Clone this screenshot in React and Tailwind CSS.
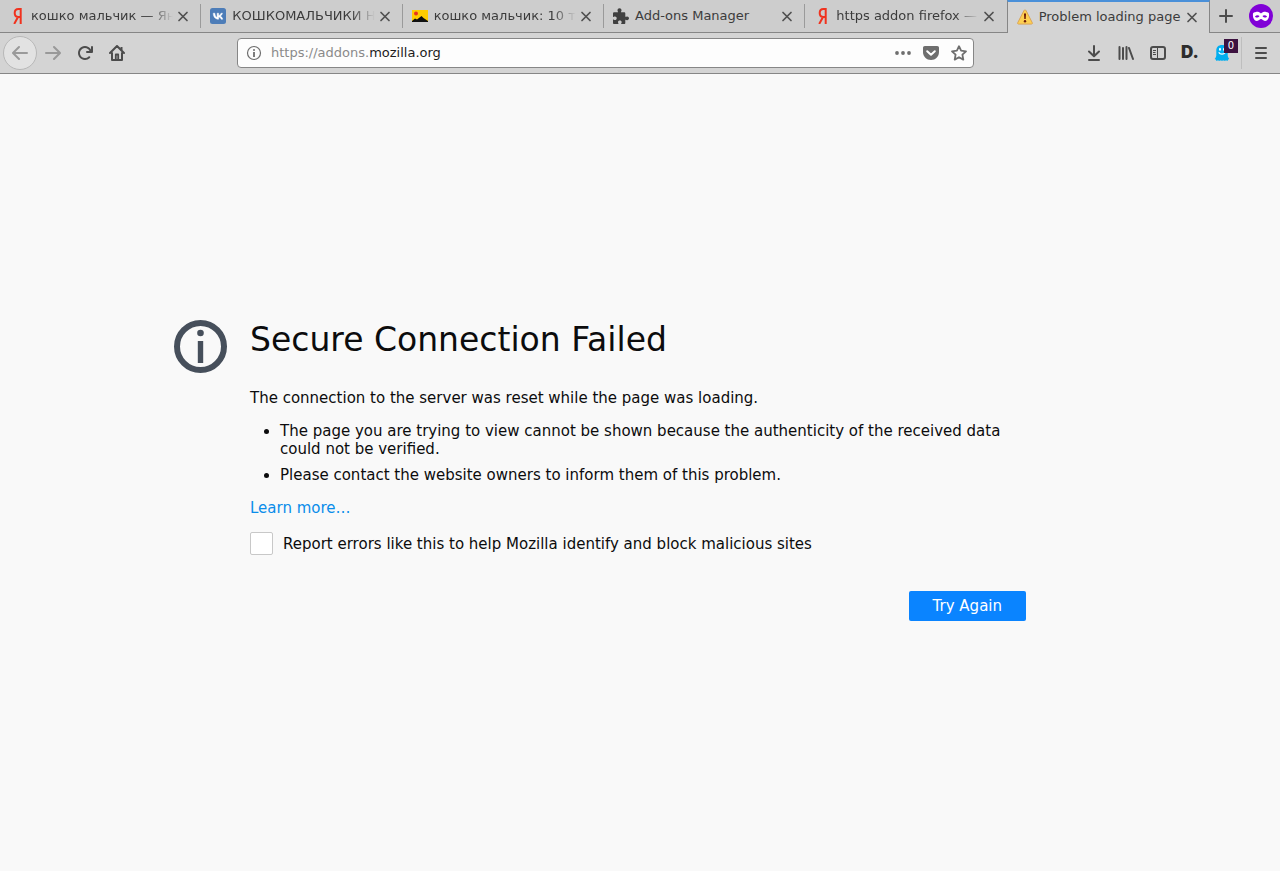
import { useState } from 'react';

const YandexIcon = () => (
  <svg width="16" height="16" viewBox="0 0 16 16" fill="none" stroke="#f0321e" strokeWidth="2">
    <path d="M11.700 0v16M12 1H9.500C7 1 5.700 2.600 5.700 5s1.500 4 3.700 4H12M9 9l-3.800 7" />
  </svg>
);

const VkIcon = () => (
  <svg width="16" height="16" viewBox="0 0 16 16">
    <rect width="16" height="16" rx="2.500" fill="#4d7db8" />
    <path
      d="M8.500 11.200c-3.300 0-5.200-2.300-5.300-6h1.700c.1 2.700 1.300 3.900 2.200 4.100V5.200h1.600v2.300c.9-.1 1.900-1.200 2.300-2.300h1.500c-.3 1.400-1.300 2.400-2.100 2.900.8.4 1.900 1.300 2.400 3.100h-1.700c-.4-1.100-1.300-2-2.400-2.100v2.100z"
      fill="#fff"
      stroke="#fff"
      strokeWidth=".4"
    />
  </svg>
);

const ImagesIcon = () => (
  <svg width="16" height="16" viewBox="0 0 16 16">
    <path d="M0 2h16v12H0z" fill="#fc0" />
    <path d="M0 14v-1l3-2.500 2 1L9.500 8l2 2 1.500 1 3 2v1z" fill="#111" />
    <circle cx="4" cy="5.500" r="2" fill="#e8321e" />
  </svg>
);

const PuzzleIcon = () => (
  <svg width="16" height="16" viewBox="0 0 16 16" fill="#404040">
    <path d="M0 5.500C0 4.700.6 4.200 1.300 4.200H5c.3-.4-.5-1-.5-2C4.500 1 5.300.2 6.500.2s2 .8 2 2c0 1-.8 1.600-.5 2h3.200c.6 0 1.100.5 1.100 1.100v3.500c.4.3.8-.4 1.800-.4 1.200 0 1.900.8 1.900 1.900s-.8 1.900-1.900 1.900c-1 0-1.400-.7-1.800-.4V15c0 .6-.4 1-1 1H8.200c-.4-.4.500-.9.500-1.900 0-.9-.8-1.600-1.900-1.600S5 13.200 5 14.100c0 1 .8 1.500.4 1.900H1.200C.5 16 0 15.500 0 14.900v-3.400c.4-.4.900.5 2 .5 1 0 1.700-.8 1.700-1.800S3 8.400 2 8.400c-1.100 0-1.600.9-2 .4z" />
  </svg>
);

const WarningIcon = () => (
  <svg width="16" height="16" viewBox="0 0 16 16">
    <path d="M8 .9c.5 0 .8.200 1 .6l6.300 12.300c.3.700 0 1.300-.8 1.300h-13c-.8 0-1.100-.6-.8-1.300L7 1.500c.2-.4.500-.6 1-.6z" fill="#fdcf50" stroke="#d9a45a" />
    <path d="M7 4.500h2l-.3 5.500H7.300z" fill="#6b1a05" />
    <circle cx="8" cy="12.200" r="1.200" fill="#6b1a05" />
  </svg>
);

const CloseIcon = () => (
  <svg width="12" height="12" viewBox="0 0 12 12" stroke="#505050" strokeWidth="1.700" strokeLinecap="round">
    <path d="M2 2.500l8 8M10 2.500l-8 8" />
  </svg>
);

const BackIcon = () => (
  <svg width="16" height="16" viewBox="0 0 16 16" fill="#9a9a9a">
    <path d="M15 7H3.414l4.293-4.293a1 1 0 0 0-1.414-1.414l-6 6a1 1 0 0 0 0 1.414l6 6a1 1 0 0 0 1.414-1.414L3.414 9H15a1 1 0 0 0 0-2z" />
  </svg>
);

const ForwardIcon = () => (
  <svg width="16" height="16" viewBox="0 0 16 16" fill="#999">
    <path d="M15.707 7.293l-6-6a1 1 0 0 0-1.414 1.414L12.586 7H1a1 1 0 0 0 0 2h11.586l-4.293 4.293a1 1 0 1 0 1.414 1.414l6-6a1 1 0 0 0 0-1.414z" />
  </svg>
);

const ReloadIcon = () => (
  <svg width="16" height="16" viewBox="0 0 16 16" fill="#4c4c4c">
    <path d="M15 1a1 1 0 0 0-1 1v2.418A6.995 6.995 0 1 0 8 15a6.954 6.954 0 0 0 4.950-2.050 1 1 0 0 0-1.414-1.414A5.019 5.019 0 1 1 12.549 6H10a1 1 0 0 0 0 2h5a1 1 0 0 0 1-1V2a1 1 0 0 0-1-1z" />
  </svg>
);

const HomeIcon = () => (
  <svg width="16" height="16" viewBox="0 0 16 16" fill="none" stroke="#4c4c4c" strokeWidth="2" strokeLinecap="round" strokeLinejoin="round">
    <path d="M1 8l7-7 7 7M3 8v7h10V8" />
    <path d="M6.800 14.500V9.500h2.400v5" strokeWidth="1.800" />
    <path d="M12.500 2v3" strokeLinecap="butt" />
  </svg>
);

const SiteInfoIcon = () => (
  <svg width="16" height="16" viewBox="0 0 16 16">
    <circle cx="8" cy="8" r="6.500" fill="none" stroke="#6e6e6e" strokeWidth="1.200" />
    <circle cx="8" cy="5" r="1" fill="#6e6e6e" />
    <path d="M7.100 7h1.800v5H7.100z" fill="#6e6e6e" />
  </svg>
);

const DotsIcon = () => (
  <svg width="16" height="16" viewBox="0 0 16 16" fill="#6e6e6e">
    <circle cx="2" cy="8" r="1.900" />
    <circle cx="8" cy="8" r="1.900" />
    <circle cx="14" cy="8" r="1.900" />
  </svg>
);

const PocketIcon = () => (
  <svg width="16" height="16" viewBox="0 0 16 16">
    <path d="M1.800 1h12.400C15.300 1 16 1.700 16 2.800V7c0 4.600-3.600 8-8 8s-8-3.400-8-8V2.800C0 1.700.7 1 1.800 1z" fill="#6e6e6e" />
    <path d="M4.200 6.200L8 9.800l3.800-3.600" fill="none" stroke="#fff" strokeWidth="2" strokeLinecap="round" strokeLinejoin="round" />
  </svg>
);

const StarIcon = () => (
  <svg width="16" height="16" viewBox="0 0 16 16" fill="none" stroke="#6e6e6e" strokeWidth="1.800" strokeLinejoin="round">
    <path d="M8 1.200l2.100 4.500 4.900.6-3.600 3.400.9 4.900L8 12.200l-4.300 2.400.9-4.900L1 6.300l4.900-.6z" />
  </svg>
);

const DownloadIcon = () => (
  <svg width="16" height="16" viewBox="0 0 16 16" fill="none" stroke="#4c4c4c" strokeWidth="2" strokeLinecap="round" strokeLinejoin="round">
    <path d="M8 1v10M3 6.500L8 11.300 13 6.500M3 15h10" />
  </svg>
);

const LibraryIcon = () => (
  <svg width="16" height="16" viewBox="0 0 16 16" fill="none" stroke="#4c4c4c" strokeWidth="2" strokeLinecap="round">
    <path d="M1.500 2v12M5 3v11M8.500 2v12M11 3l4 11" strokeWidth="2" />
  </svg>
);

const SidebarIcon = () => (
  <svg width="16" height="16" viewBox="0 0 16 16" fill="none" stroke="#4c4c4c">
    <rect x="1" y="2" width="14" height="12" rx="2" strokeWidth="2" />
    <path d="M7.500 2v12M3 5.500h3M3 7.500h2.500M3 9.500h3" />
  </svg>
);

const GhostIcon = () => (
  <svg width="16" height="16" viewBox="0 0 16 16">
    <path d="M8 0c3.600 0 5.700 2.200 5.700 5.500v5c.2 1.500.8 2.500 1.600 3.600-.9.200-1.300.7-1.800 1.900-1-.5-1.800-.6-2.700 0-.9-.6-1.800-.6-2.800 0-1-.6-1.900-.6-2.800 0-.9-.6-1.700-.5-2.700 0-.5-1.200-.9-1.700-1.800-1.900.8-1.100 1.400-2.100 1.600-3.600v-5C2.300 2.200 4.400 0 8 0z" fill="#00aef0" />
    <ellipse cx="6" cy="4.200" rx="1" ry="1.500" fill="#fff" />
    <ellipse cx="10" cy="4.200" rx="1" ry="1.500" fill="#fff" />
    <path d="M4.700 7.300c1.600 2.400 5 2.400 6.600 0" fill="none" stroke="#fff" strokeWidth="1.200" />
  </svg>
);

const MenuIcon = () => (
  <svg width="16" height="16" viewBox="0 0 16 16" stroke="#4c4c4c" strokeWidth="2" strokeLinecap="round">
    <path d="M3 3h10M3 8h10M3 13h10" />
  </svg>
);

const PlusIcon = () => (
  <svg width="16" height="16" viewBox="0 0 16 16" stroke="#4c4c4c" strokeWidth="2" strokeLinecap="round">
    <path d="M8 2v12M2 8h12" />
  </svg>
);

const PrivateIcon = () => (
  <svg width="24" height="24" viewBox="0 0 24 24">
    <circle cx="12" cy="12" r="12" fill="#8000d7" />
    <path
      fillRule="evenodd"
      d="M12 9.500C13.200 8.200 15 7.700 17 7.900c1.600.1 2.800.5 3 1.600.4 3-.5 7.400-4 7.400-1.800 0-2.700-1.800-4-1.800s-2.200 1.800-4 1.800c-3.500 0-4.400-4.400-4-7.400.2-1.100 1.400-1.500 3-1.600 2-.2 3.800.3 5 1.600zM5.900 12.400c.8.900 1.600 1.300 2.600 1.200s1.600-.6 2-1.500c-1-1.200-3-1.300-4.600.3zm12.200 0c-1.600-1.600-3.600-1.500-4.600-.3.400.9 1 1.400 2 1.500s1.800-.3 2.600-1.200z"
      fill="#fff"
    />
  </svg>
);

const ErrorInfoIcon = () => (
  <svg width="54" height="54" viewBox="0 0 54 54" className="shrink-0">
    <circle cx="26.500" cy="26.500" r="23.500" fill="none" stroke="#464f5b" strokeWidth="6" />
    <circle cx="26.500" cy="13" r="3.300" fill="#464f5b" />
    <path d="M23.800 21h5.400v22h-5.400z" fill="#464f5b" />
  </svg>
);

const tabs = [
  { title: 'кошко мальчик — Янд', Icon: YandexIcon, long: true },
  { title: 'КОШКОМАЛЬЧИКИ Ня', Icon: VkIcon, long: true },
  { title: 'кошко мальчик: 10 ты', Icon: ImagesIcon, long: true },
  { title: 'Add-ons Manager', Icon: PuzzleIcon },
  { title: 'https addon firefox — Я', Icon: YandexIcon, long: true },
  { title: 'Problem loading page', Icon: WarningIcon },
];

const Tab = ({ tab, active, separator, onSelect }) => (
  <div
    className={`flex h-full min-w-0 flex-1 items-center ${
      active
        ? 'border-x border-t-2 border-x-[#868686] border-t-[#4a90d9] bg-[#d4d4d4] pb-[2px] pl-[9px]'
        : 'border-b border-[#868686] pl-[9px]'
    }`}
  >
    <button
      role="tab"
      aria-selected={active}
      onClick={onSelect}
      className="flex min-w-0 flex-1 items-center gap-[6px] text-left"
    >
      <span className="shrink-0">
        <tab.Icon />
      </span>
      <span
        className={`min-w-0 flex-1 whitespace-nowrap ${
          tab.long ? 'overflow-hidden [mask-image:linear-gradient(to_left,transparent,black_24px)]' : ''
        }`}
      >
        {tab.title}
      </span>
    </button>
    <button aria-label="Close tab" className="mr-[11px] ml-1 shrink-0">
      <CloseIcon />
    </button>
    {!active && <div className={separator ? 'h-6 w-px bg-[#9a9a9a]' : 'w-px'} />}
  </div>
);

const ToolbarButton = ({ label, children }) => (
  <button aria-label={label} className="flex size-8 shrink-0 items-center justify-center">
    {children}
  </button>
);

const App = () => {
  const [activeTab, setActiveTab] = useState(5);
  const [report, setReport] = useState(false);

  return (
    <div className="flex min-h-screen flex-col bg-[#f9f9f9] font-['DejaVu_Sans',sans-serif] text-[#0c0c0d]">
      <header>
        <div className="flex h-[33px] bg-[#cdcdcd] text-[13px] text-[#3c3c3c]">
          <div role="tablist" className="flex min-w-0 flex-1">
            {tabs.map((tab, i) => (
              <Tab
                key={i}
                tab={tab}
                active={i === activeTab}
                separator={i !== activeTab && i + 1 !== activeTab}
                onSelect={() => setActiveTab(i)}
              />
            ))}
          </div>
          <div className="flex w-[70px] items-center justify-between border-b border-[#868686] pr-[7px] pl-2">
            <button aria-label="New tab">
              <PlusIcon />
            </button>
            <PrivateIcon />
          </div>
        </div>

        <nav className="flex h-[41px] items-center border-b border-[#868686] bg-[#d4d4d4] px-[3px]">
          <button
            aria-label="Back"
            className="flex size-[34px] shrink-0 items-center justify-center rounded-full border border-[#b8b8b8] bg-[#e2e2e2]"
          >
            <BackIcon />
          </button>
          <ToolbarButton label="Forward"><ForwardIcon /></ToolbarButton>
          <ToolbarButton label="Reload"><ReloadIcon /></ToolbarButton>
          <ToolbarButton label="Home"><HomeIcon /></ToolbarButton>

          <div className="mx-[104px] flex h-[30px] min-w-0 flex-1 items-center rounded-[4px] border border-[#868686] bg-[#fdfdfd] pr-[6px] pl-2">
            <SiteInfoIcon />
            <a href="https://addons.mozilla.org" className="ml-[9px] flex-1 text-[13px] text-[#8a8a8a]">
              https://addons.<span className="text-[#1c1c1c]">mozilla.org</span>
            </a>
            <div className="flex gap-3">
              <button aria-label="Page actions"><DotsIcon /></button>
              <button aria-label="Save to Pocket"><PocketIcon /></button>
              <button aria-label="Bookmark this page"><StarIcon /></button>
            </div>
          </div>

          <ToolbarButton label="Downloads"><DownloadIcon /></ToolbarButton>
          <ToolbarButton label="Library"><LibraryIcon /></ToolbarButton>
          <ToolbarButton label="Sidebars"><SidebarIcon /></ToolbarButton>
          <ToolbarButton label="Disconnect">
            <span className="font-['Inter',sans-serif] text-[17px] font-black text-[#2c2c2c]">D.</span>
          </ToolbarButton>
          <button aria-label="Ghostery" className="relative flex size-8 shrink-0 items-center justify-center">
            <GhostIcon />
            <span className="absolute top-[2px] right-0 h-[14px] w-[14px] bg-[#3d1240] text-center text-[10px] leading-[14px] text-white">
              0
            </span>
          </button>
          <div className="mx-[3px] h-8 w-px bg-[#bebebe]" />
          <ToolbarButton label="Menu"><MenuIcon /></ToolbarButton>
        </nav>
      </header>

      <main className="flex flex-1 items-center justify-center pb-1 text-[15px] leading-[18px]">
        <div className="flex w-full max-w-[932px] gap-[22px] pr-20">
          <ErrorInfoIcon />
          <div className="flex-1">
            <h1 className="mb-[30px] text-[33px] leading-[39px]">Secure Connection Failed</h1>
            <p className="mb-[15px]">The connection to the server was reset while the page was loading.</p>
            <ul className="mb-[15px] list-disc space-y-2 pl-[30px]">
              <li>
                The page you are trying to view cannot be shown because the authenticity of the received data could
                not be verified.
              </li>
              <li>Please contact the website owners to inform them of this problem.</li>
            </ul>
            <a href="#learn-more" className="text-[#0a8dea]">Learn more…</a>
            <div className="mt-[15px] flex items-center gap-[10px]">
              <input
                id="report"
                type="checkbox"
                checked={report}
                onChange={(e) => setReport(e.target.checked)}
                className="size-[23px] appearance-none rounded-[2px] border border-[#c8c8c8] bg-white checked:bg-[#0a84ff]"
              />
              <label htmlFor="report">Report errors like this to help Mozilla identify and block malicious sites</label>
            </div>
            <div className="mt-9 flex justify-end">
              <button className="h-[30px] rounded-[2px] bg-[#0a84ff] px-6 text-white">Try Again</button>
            </div>
          </div>
        </div>
      </main>
    </div>
  );
};

export default App;
